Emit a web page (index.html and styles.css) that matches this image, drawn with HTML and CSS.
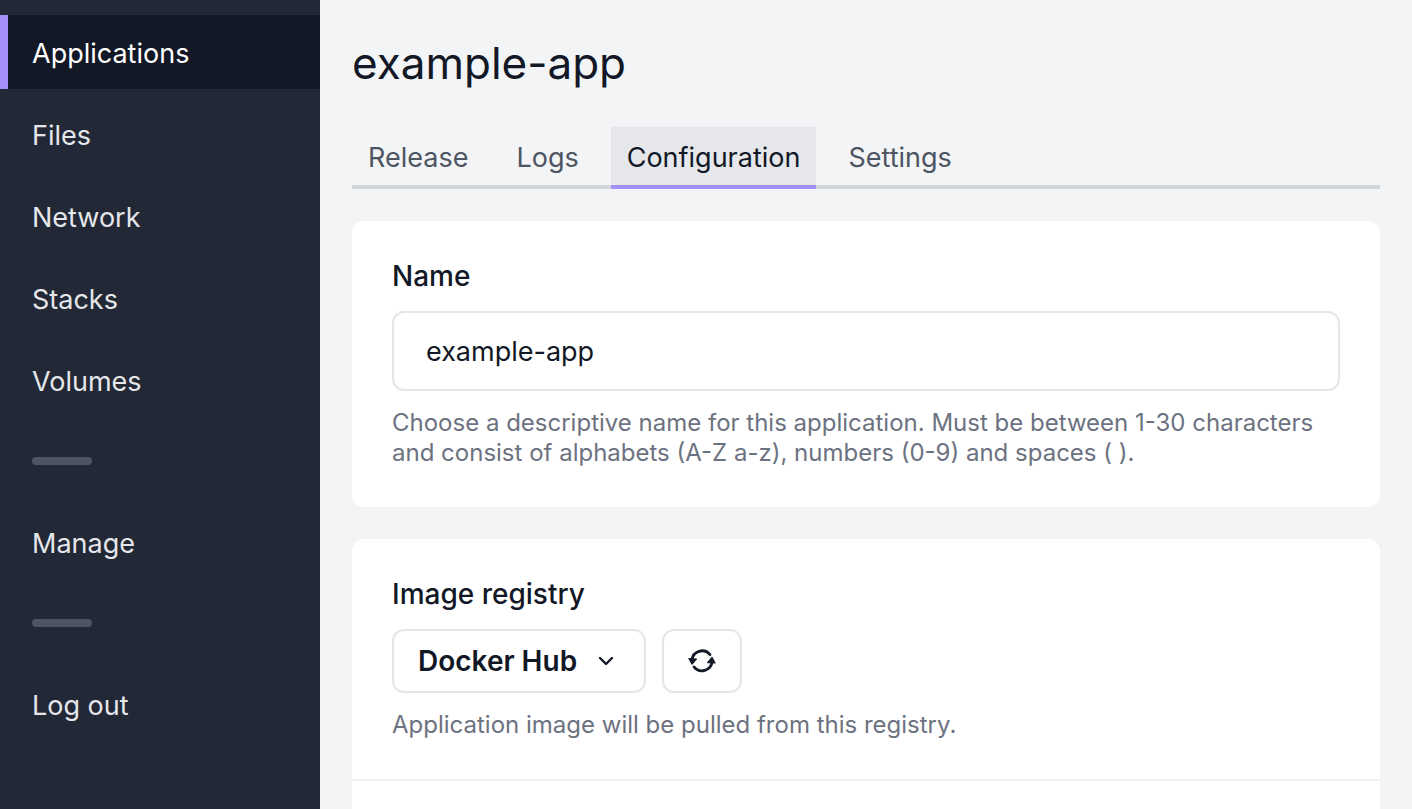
FILE: index.html
```
<!DOCTYPE html>
<html lang="en">
<head>
<meta charset="utf-8">
<meta name="viewport" content="width=device-width, initial-scale=1">
<title>example-app</title>
<link rel="stylesheet" href="styles.css">
</head>
<body>
<div class="layout">
  <nav class="sidebar" aria-label="Main">
    <a class="nav-link nav-link-active" href="#" aria-current="page">Applications</a>
    <a class="nav-link" href="#">Files</a>
    <a class="nav-link" href="#">Network</a>
    <a class="nav-link" href="#">Stacks</a>
    <a class="nav-link" href="#">Volumes</a>
    <hr class="nav-divider">
    <a class="nav-link" href="#">Manage</a>
    <hr class="nav-divider">
    <a class="nav-link" href="#">Log out</a>
  </nav>
  <main class="content">
    <h1 class="title">example-app</h1>
    <nav class="tabs" aria-label="Application">
      <a class="tab" href="#">Release</a>
      <a class="tab" href="#">Logs</a>
      <a class="tab tab-active" href="#" aria-current="page">Configuration</a>
      <a class="tab" href="#">Settings</a>
    </nav>
    <form class="cards">
      <section class="card">
        <div class="field">
          <label class="label" for="name">Name</label>
          <input class="input" id="name" type="text" value="example-app">
          <p class="help">Choose a descriptive name for this application. Must be between 1-30 characters and consist of alphabets (A-Z a-z), numbers (0-9) and spaces ( ).</p>
        </div>
      </section>
      <section class="card card-open">
        <div class="field">
          <label class="label" for="registry">Image registry</label>
          <div class="controls">
            <div class="select-wrap">
              <select class="select" id="registry"><option>Docker Hub</option></select>
              <svg class="chevron" viewBox="0 0 16 16" aria-hidden="true"><path d="M2 5l6 6 6-6"/></svg>
            </div>
            <button class="refresh" type="button" aria-label="Refresh registries">
              <svg class="refresh-icon" viewBox="0 0 28 28" aria-hidden="true"><path class="arc" d="M3.900 13A10.200 10.200 0 0 1 22 7.700M24.100 14.600A10.200 10.200 0 0 1 6 19.900"/><path class="head" d="M1 11.600L8.400 12L4 17.200ZM27 16L19.600 15.600L24 10.400Z"/></svg>
            </button>
          </div>
          <p class="help">Application image will be pulled from this registry.</p>
        </div>
      </section>
    </form>
  </main>
</div>
</body>
</html>
```
FILE: styles.css
```
* { box-sizing: border-box; }
body {
  margin: 0;
  background: #f3f4f6;
  color: #121826;
  font-family: Inter, "Liberation Sans", sans-serif;
  font-size: 27px;
  line-height: 42px;
}
.layout { display: flex; height: 100vh; overflow: hidden; }
.sidebar {
  flex: 0 0 320px;
  display: flex;
  flex-direction: column;
  gap: 8px;
  padding-top: 15px;
  background: #222835;
}
.nav-link {
  padding: 18px 24px 14px;
  border-left: 8px solid transparent;
  color: #e5e7eb;
  text-decoration: none;
}
.nav-link-active { background: #121826; border-left-color: #a38ff5; color: #fff; }
.nav-divider {
  width: 60px;
  height: 8px;
  margin: 32px;
  border: 0;
  border-radius: 4px;
  background: #4e5562;
}
.content { flex: 1; min-width: 0; padding: 31px 32px; }
.title { margin: 0 0 32px; font-size: 44px; font-weight: 400; line-height: 64px; }
.tabs { display: flex; gap: 16px; border-bottom: 4px solid #d2d5da; }
.tab {
  margin-bottom: -4px;
  padding: 12px 16px 8px;
  border-bottom: 4px solid transparent;
  color: #4e5562;
  line-height: 38px;
  text-decoration: none;
}
.tab-active { background: #e5e7eb; border-bottom-color: #a38ff5; color: #121826; }
.cards { display: flex; flex-direction: column; gap: 32px; margin-top: 32px; }
.card { border-radius: 12px; background: #fff; }
.card-open { min-height: 320px; }
.field { padding: 34px 40px 39px; }
.card-open .field { border-bottom: 2px solid #eeeff1; }
.label { display: block; margin-bottom: 14px; font-size: 28px; font-weight: 500; }
.input {
  display: block;
  width: 100%;
  height: 80px;
  padding: 0 32px;
  border: 2px solid #e5e6eb;
  border-radius: 12px;
  background: #fff;
  color: inherit;
  font: inherit;
}
.help { margin: 17px 0 0; color: #6c727f; font-size: 24px; line-height: 30px; }
.controls { display: flex; gap: 16px; }
.select-wrap { position: relative; }
.select {
  appearance: none;
  width: 254px;
  height: 64px;
  padding: 0 24px;
  border: 2px solid #e5e6eb;
  border-radius: 12px;
  background: #fff;
  color: inherit;
  font: inherit;
  font-size: 28px;
  font-weight: 600;
}
.chevron {
  position: absolute;
  right: 32px;
  top: 24px;
  width: 16px;
  height: 16px;
  fill: none;
  stroke: #121826;
  stroke-width: 2.4;
  stroke-linecap: round;
  stroke-linejoin: round;
  pointer-events: none;
}
.refresh {
  display: flex;
  align-items: center;
  justify-content: center;
  width: 80px;
  height: 64px;
  padding: 0;
  border: 2px solid #e5e6eb;
  border-radius: 12px;
  background: #fff;
}
.refresh-icon { width: 28px; height: 28px; }
.arc { fill: none; stroke: #121826; stroke-width: 2.8; stroke-linecap: round; }
.head { fill: #121826; stroke: #121826; stroke-width: 1.2; stroke-linejoin: round; }
```
